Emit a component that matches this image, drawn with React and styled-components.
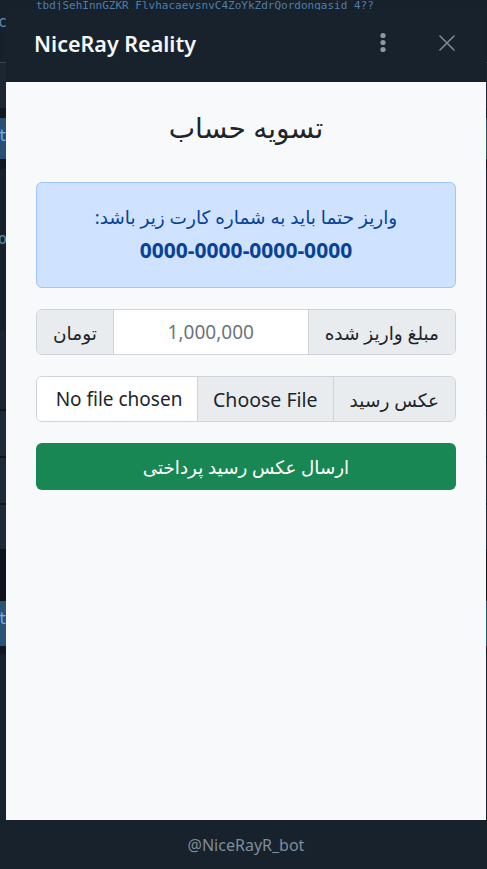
import React from 'react'
import styled, { createGlobalStyle } from 'styled-components'

const GlobalStyle = createGlobalStyle`
  html, body {
    margin: 0;
    padding: 0;
  }
  body {
    background: #17212b;
    font-family: "Noto Sans", "DejaVu Sans", sans-serif;
    overflow: hidden;
  }
`

// strips of the chat page that peek out behind the sheet
const bands = [
  { h: 12, bg: '#17212b', text: 'tbdjSehInnGZKR_FlvhacaevsnvC4ZoYkZdrQordonqasid 4??', color: '#4f7eab', small: true },
  { h: 50, bg: '#17212b', text: 'c', color: '#5d8cba', top: 0 },
  { h: 1, bg: '#3a4652' },
  { h: 45, bg: '#1c2630' },
  { h: 10, bg: '#111820' },
  { h: 41, bg: '#2b4f73', text: 't', color: '#6ab3f3', top: 8 },
  { h: 10, bg: '#111820' },
  { h: 162, bg: '#17212b', text: 'oc', color: '#5d8cba', top: 60 },
  { h: 78, bg: '#1b2531' },
  { h: 2, bg: '#0f151c' },
  { h: 45, bg: '#1e2a36' },
  { h: 2, bg: '#0f151c' },
  { h: 45, bg: '#1e2a36' },
  { h: 2, bg: '#0f151c' },
  { h: 44, bg: '#1e2a36' },
  { h: 52, bg: '#0e141b' },
  { h: 45, bg: '#2b5278', text: 't', color: '#6ab3f3', top: 8 },
  { h: 8, bg: '#111820' },
  { h: 260, bg: '#18222d' },
]

function App() {
  return (
    <Screen>
      <GlobalStyle />
      <Backdrop>
        {bands.map((b, i) => (
          <Band key={i} height={b.h} bg={b.bg} color={b.color} offset={b.top || 0} small={b.small}>
            {b.text}
          </Band>
        ))}
      </Backdrop>

      <Sheet>
        <Header>
          <Title>NiceRay Reality</Title>
          <IconButton aria-label="menu">
            <svg width="8" height="22" viewBox="0 0 8 22">
              <circle cx="4" cy="3.5" r="2.6" fill="#8b97a4" />
              <circle cx="4" cy="10.5" r="2.6" fill="#8b97a4" />
              <circle cx="4" cy="17.5" r="2.6" fill="#8b97a4" />
            </svg>
          </IconButton>
          <IconButton aria-label="close" wide>
            <svg width="16" height="16" viewBox="0 0 16 16">
              <path d="M1 1 L15 15 M15 1 L1 15" stroke="#7d8894" strokeWidth="1.6" strokeLinecap="round" />
            </svg>
          </IconButton>
        </Header>

        <Body dir="rtl">
          <Heading>تسویه حساب</Heading>
          <Stack>
            <Alert>
              <AlertText>واریز حتما باید به شماره کارت زیر باشد:</AlertText>
              <CardNumber dir="ltr">0000-0000-0000-0000</CardNumber>
            </Alert>

            <InputGroup>
              <Addon>مبلغ واریز شده</Addon>
              <AmountInput placeholder="1,000,000" dir="ltr" />
              <Addon>تومان</Addon>
            </InputGroup>

            <InputGroup>
              <Addon>عکس رسید</Addon>
              <FileBox>
                <FileButton>Choose File</FileButton>
                <FileName>No file chosen</FileName>
              </FileBox>
            </InputGroup>

            <SubmitButton>ارسال عکس رسید پرداختی</SubmitButton>
          </Stack>
        </Body>

        <Footer>@NiceRayR_bot</Footer>
      </Sheet>
    </Screen>
  )
}

export default App

const Screen = styled.div`
  position: relative;
  width: 487px;
  height: 869px;
  overflow: hidden;
  background: #17212b;
`
const Backdrop = styled.div`
  display: flex;
  flex-direction: column;
  height: 100%;
`
const Band = styled.div`
  flex: 0 0 ${p => p.height}px;
  box-sizing: border-box;
  background: ${p => p.bg};
  color: ${p => p.color || 'transparent'};
  font-family: "DejaVu Sans Mono", monospace;
  font-size: ${p => (p.small ? 11 : 15)}px;
  line-height: ${p => (p.small ? 11 : 20)}px;
  padding-top: ${p => p.offset}px;
  padding-left: ${p => (p.small ? 36 : 0)}px;
  text-indent: ${p => (p.small ? 0 : -2)}px;
  white-space: nowrap;
  overflow: hidden;
`
const Sheet = styled.div`
  position: absolute;
  top: 10px;
  left: 6px;
  right: 1px;
  bottom: 0;
  display: flex;
  flex-direction: column;
  background: #18222d;
`
const Header = styled.div`
  flex: 0 0 72px;
  box-sizing: border-box;
  display: flex;
  align-items: center;
  padding: 0 24px 6px 28px;
  background: #18222d;
`
const Title = styled.div`
  flex: 1;
  color: #f4f6f8;
  font-size: 21.5px;
  font-weight: 600;
`
const IconButton = styled.div`
  display: flex;
  align-items: center;
  justify-content: center;
  width: ${p => (p.wide ? 30 : 20)}px;
  margin-left: ${p => (p.wide ? 39 : 0)}px;
`
const Body = styled.div`
  flex: 1;
  background: #f8f9fa;
  padding: 28px 30px 0;
`
const Heading = styled.h3`
  margin: 0 0 38px;
  text-align: center;
  font-size: 28px;
  font-weight: 500;
  line-height: 34px;
  color: #212529;
`
const Stack = styled.div`
  display: flex;
  flex-direction: column;
  gap: 21px;
`
const Alert = styled.div`
  background: #cfe2ff;
  border: 1px solid #9ec5fe;
  border-radius: 6px;
  padding: 20px 16px 23px;
  text-align: center;
  color: #084298;
`
const AlertText = styled.div`
  font-size: 18.5px;
  line-height: 27px;
`
const CardNumber = styled.div`
  margin-top: 6px;
  font-size: 21px;
  font-weight: 700;
  line-height: 28px;
`
const InputGroup = styled.div`
  display: flex;
  height: 46px;
  border: 1px solid #ced4da;
  border-radius: 6px;
  overflow: hidden;
  box-sizing: border-box;
  font-size: 18.5px;
  color: #212529;
`
const Addon = styled.div`
  display: flex;
  align-items: center;
  padding: 0 16px;
  background: #e9ecef;
  white-space: nowrap;
`
const AmountInput = styled.input`
  flex: 1;
  min-width: 0;
  border: none;
  border-left: 1px solid #ced4da;
  border-right: 1px solid #ced4da;
  background: #fff;
  font: inherit;
  font-size: 19px;
  text-align: center;
  outline: none;
  &::placeholder {
    color: #6c757d;
  }
`
const FileBox = styled.div`
  flex: 1;
  display: flex;
  border-right: 1px solid #ced4da;
  background: #fff;
`
const FileButton = styled.div`
  display: flex;
  align-items: center;
  padding: 0 15px;
  background: #e9ecef;
  border-left: 1px solid #ced4da;
  white-space: nowrap;
  font-size: 19.5px;
`
const FileName = styled.div`
  flex: 1;
  display: flex;
  align-items: center;
  justify-content: center;
  padding-left: 4px;
  white-space: nowrap;
  font-size: 19px;
`
const SubmitButton = styled.button`
  height: 47px;
  border: none;
  border-radius: 6px;
  background: #198754;
  color: #fff;
  font-family: inherit;
  font-size: 18.3px;
`
const Footer = styled.div`
  flex: 0 0 49px;
  display: flex;
  align-items: center;
  justify-content: center;
  color: #7f8c99;
  font-size: 16px;
  background: #18222d;
`
